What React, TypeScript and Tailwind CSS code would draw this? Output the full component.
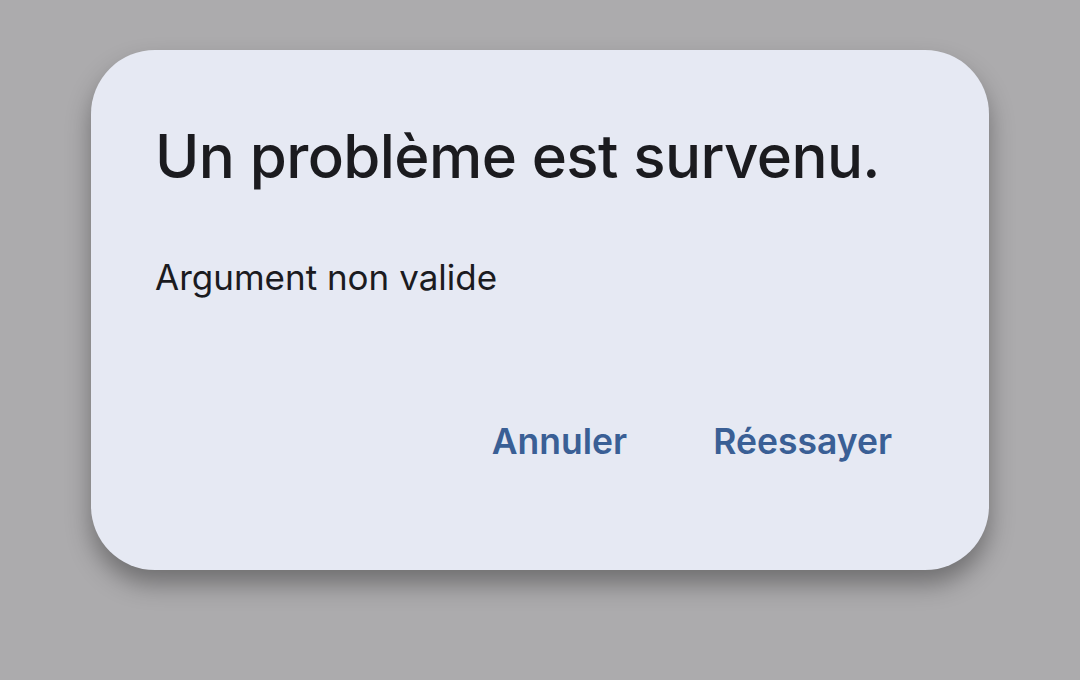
export default function App() {
  return (
    <div className="flex h-[680px] w-[1080px] items-start justify-center bg-[#acabad] pt-[50px] font-['Inter',sans-serif]">
      <div className="flex h-[520px] w-[898px] flex-col rounded-[64px] bg-[#e6e9f3] pl-[64px] pr-[97px] pt-[70px] shadow-[0_14px_24px_rgba(0,0,0,0.35)]">
        <h1 className="text-[60px] leading-[72px] font-medium tracking-[-0.6px] whitespace-nowrap text-[#1b1b1f]">
          Un problème est survenu.
        </h1>
        <p className="mt-[63px] text-[35px] leading-[44px] text-[#1b1b1f]">Argument non valide</p>
        <div className="mt-[121px] flex justify-end gap-[86px]">
          <button className="text-[35.5px] leading-[44px] font-semibold text-[#3a5f95]">Annuler</button>
          <button className="text-[35.5px] leading-[44px] font-semibold text-[#3a5f95]">Réessayer</button>
        </div>
      </div>
    </div>
  );
}
